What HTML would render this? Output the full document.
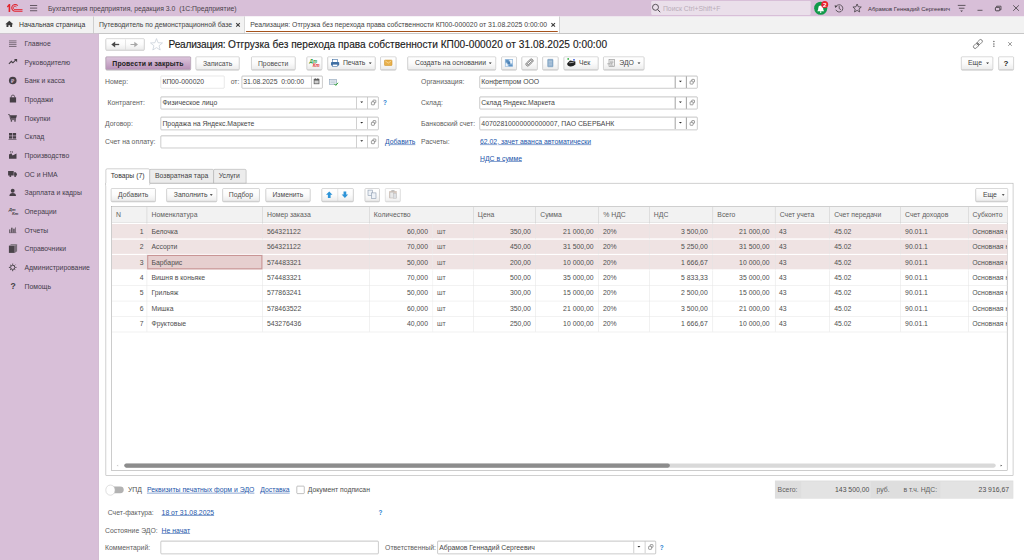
<!DOCTYPE html><html lang="ru"><head><meta charset="utf-8"><title>Реализация</title><style>
html,body{margin:0;padding:0;background:#fff;overflow:hidden;width:1024px;height:560px}
#stage{position:absolute;left:0;top:0;width:1920px;height:1050px;transform:scale(0.533333);transform-origin:0 0;
 font-family:"Liberation Sans",sans-serif;font-size:12.85px;color:#4e4e4e;overflow:hidden;background:#fff}
.a{position:absolute;box-sizing:border-box;white-space:pre}
.t{height:20px;line-height:20px}
.lbl{color:#5e5e5e}
.btn{border:1px solid #b8b8b8;border-radius:2px;background:linear-gradient(#ffffff,#fbfbfb 50%,#ececec);box-shadow:0 1px 1px rgba(0,0,0,.22);text-align:center;line-height:23px;color:#4c4c4c}
.btnp{letter-spacing:0.27px;border:1px solid #8c6c8c;border-radius:2px;background:linear-gradient(#dcc6dc,#c9a9c9 55%,#b892b8);box-shadow:0 1px 1px rgba(0,0,0,.25);text-align:center;line-height:23px;color:#222;font-weight:bold}
.inp{border:1px solid #9e9e9e;box-shadow:inset 0 1px 1px rgba(0,0,0,.07);border-radius:2px;background:#fff;line-height:22px;padding-top:0.5px;padding-left:2.5px;color:#464646}
.inpl{border-color:#d4d4d4;box-shadow:none}
.lnk{color:#2255aa;text-decoration:underline}
.q{color:#2a7fd0;font-weight:bold;font-size:12px}
.side{color:#443c4a}
.th{color:#606060}
</style></head><body><div id="stage">
<div class="a " style="left:0.0px;top:0.0px;width:1920.0px;height:31.0px;background:#d8bfd8"></div>
<div class="a " style="left:0.0px;top:31.0px;width:1920.0px;height:32.0px;background:#f2f2f2;border-bottom:1px solid #9c9c9c"></div>
<div class="a " style="left:0.0px;top:63.0px;width:185.0px;height:987.0px;background:#d8bfd8;border-right:1px solid #c4aac4"></div>
<div class="a t " style="left:90.0px;top:6.0px;color:#4a3f4a">Бухгалтерия предприятия, редакция 3.0  (1С:Предприятие)</div>
<div class="a t " style="left:35.5px;top:36.0px;color:#333">Начальная страница</div>
<div class="a " style="left:174.5px;top:31.0px;width:1.0px;height:31.0px;background:#b0b0b0"></div>
<div class="a t " style="left:185.5px;top:36.0px;color:#444">Путеводитель по демонстрационной базе</div>
<div class="a " style="left:457.5px;top:31.0px;width:1.5px;height:31.0px;background:#b0b0b0"></div>
<div class="a " style="left:459.0px;top:31.0px;width:590.0px;height:31.0px;background:#fff"></div>
<div class="a t " style="left:469.0px;top:36.0px;color:#444">Реализация: Отгрузка без перехода права собственности КП00-000020 от 31.08.2025 0:00:00</div>
<div class="a " style="left:461.0px;top:58.0px;width:585.0px;height:2.0px;background:#a5521c;border-radius:1px"></div>
<div class="a " style="left:1049.0px;top:31.0px;width:1.0px;height:31.0px;background:#b0b0b0"></div>
<div class="a " style="left:1220.5px;top:2.0px;width:299.5px;height:25.5px;background:#eadfea;border-radius:2px"></div>
<div class="a t " style="left:1243.0px;top:6.0px;color:#b9adb9">Поиск Ctrl+Shift+F</div>
<div class="a t " style="left:1627.5px;top:6.0px;font-size:11px;color:#3a3340">Абрамов Геннадий Сергеевич</div>
<div class="a t side" style="left:46.0px;top:71.5px;">Главное</div>
<div class="a t side" style="left:46.0px;top:106.5px;">Руководителю</div>
<div class="a t side" style="left:46.0px;top:141.5px;">Банк и касса</div>
<div class="a t side" style="left:46.0px;top:176.5px;">Продажи</div>
<div class="a t side" style="left:46.0px;top:211.5px;">Покупки</div>
<div class="a t side" style="left:46.0px;top:246.5px;">Склад</div>
<div class="a t side" style="left:46.0px;top:281.5px;">Производство</div>
<div class="a t side" style="left:46.0px;top:316.5px;">ОС и НМА</div>
<div class="a t side" style="left:46.0px;top:351.5px;">Зарплата и кадры</div>
<div class="a t side" style="left:46.0px;top:386.5px;">Операции</div>
<div class="a t side" style="left:46.0px;top:421.5px;">Отчеты</div>
<div class="a t side" style="left:46.0px;top:456.5px;">Справочники</div>
<div class="a t side" style="left:46.0px;top:491.5px;">Администрирование</div>
<div class="a t side" style="left:46.0px;top:526.5px;">Помощь</div>
<div class="a btn" style="left:197.5px;top:71.5px;width:73.0px;height:22.5px;"></div>
<div class="a " style="left:234.5px;top:73.5px;width:1.0px;height:19.5px;background:#d0d0d0"></div>
<div class="a" style="left:316.0px;top:70.0px;height:28px;line-height:28px;font-size:19px;color:#1a1a1a;-webkit-text-stroke:0.25px #1a1a1a"><span style="letter-spacing:-0.4px">Реализация: </span>Отгрузка без перехода права собственности <span style="letter-spacing:0.1px">КП00-000020 от 31.08.2025 0:00:00</span></div>
<div class="a btnp" style="left:197.5px;top:106.0px;width:160.0px;height:24.5px;">Провести и закрыть</div>
<div class="a btn" style="left:367.0px;top:106.0px;width:82.0px;height:24.5px;">Записать</div>
<div class="a btn" style="left:470.5px;top:106.0px;width:83.0px;height:24.5px;">Провести</div>
<div class="a btn" style="left:574.5px;top:106.0px;width:29.5px;height:24.5px;"></div>
<div class="a btn" style="left:613.5px;top:106.0px;width:90.5px;height:24.5px;"></div>
<div class="a t " style="left:643.0px;top:108.0px;color:#444">Печать</div>
<div class="a btn" style="left:713.0px;top:106.0px;width:29.5px;height:24.5px;"></div>
<div class="a btn" style="left:763.5px;top:106.0px;width:166.5px;height:24.5px;"></div>
<div class="a t " style="left:778.0px;top:108.0px;color:#444">Создать на основании</div>
<div class="a btn" style="left:939.5px;top:106.0px;width:29.5px;height:24.5px;"></div>
<div class="a btn" style="left:978.0px;top:106.0px;width:29.5px;height:24.5px;"></div>
<div class="a btn" style="left:1017.0px;top:106.0px;width:30.0px;height:24.5px;"></div>
<div class="a btn" style="left:1056.5px;top:106.0px;width:65.0px;height:24.5px;"></div>
<div class="a t " style="left:1085.5px;top:108.0px;color:#444">Чек</div>
<div class="a btn" style="left:1131.0px;top:106.0px;width:76.5px;height:24.5px;"></div>
<div class="a t " style="left:1161.0px;top:108.0px;color:#444">ЭДО</div>
<div class="a btn" style="left:1801.5px;top:106.0px;width:60.0px;height:24.5px;"></div>
<div class="a t " style="left:1815.0px;top:108.0px;color:#444">Еще</div>
<div class="a btn" style="left:1872.0px;top:106.0px;width:28.5px;height:24.5px;color:#222;font-size:15px"><b>?</b></div>
<div class="a t lbl" style="left:197.0px;top:144.0px;">Номер:</div>
<div class="a inp inpl" style="left:301.0px;top:141.5px;width:120.0px;height:24.5px;">КП00-000020</div>
<div class="a t lbl" style="left:432.5px;top:144.0px;">от:</div>
<div class="a inp" style="left:452.5px;top:141.5px;width:152.0px;height:24.5px;">31.08.2025  0:00:00</div>
<div class="a " style="left:583.5px;top:142.5px;width:1.0px;height:22.5px;background:#a8a8a8"></div>
<div class="a t lbl" style="left:201.5px;top:183.0px;">Контрагент:</div>
<div class="a inp" style="left:301.0px;top:180.5px;width:409.0px;height:24.5px;">Физическое лицо</div>
<div class="a " style="left:667.5px;top:181.5px;width:1.0px;height:22.5px;background:#a8a8a8"></div>
<div class="a " style="left:688.5px;top:181.5px;width:1.0px;height:22.5px;background:#a8a8a8"></div>
<div class="a t q" style="left:718.0px;top:182.5px;">?</div>
<div class="a t lbl" style="left:197.0px;top:223.0px;">Договор:</div>
<div class="a inp" style="left:301.0px;top:219.0px;width:409.0px;height:24.5px;">Продажа на Яндекс.Маркете</div>
<div class="a " style="left:667.5px;top:220.0px;width:1.0px;height:22.0px;background:#a8a8a8"></div>
<div class="a " style="left:688.5px;top:220.0px;width:1.0px;height:22.0px;background:#a8a8a8"></div>
<div class="a t lbl" style="left:197.0px;top:256.0px;">Счет на оплату:</div>
<div class="a inp" style="left:301.0px;top:253.5px;width:409.0px;height:24.5px;"></div>
<div class="a " style="left:667.5px;top:254.0px;width:1.0px;height:23.0px;background:#a8a8a8"></div>
<div class="a " style="left:688.5px;top:254.0px;width:1.0px;height:23.0px;background:#a8a8a8"></div>
<div class="a t lnk" style="left:722.0px;top:256.0px;">Добавить</div>
<div class="a t lbl" style="left:789.5px;top:144.0px;">Организация:</div>
<div class="a inp" style="left:899.0px;top:141.5px;width:409.0px;height:24.5px;">Конфетпром ООО</div>
<div class="a " style="left:1265.0px;top:142.5px;width:1.5px;height:22.5px;background:#a8a8a8"></div>
<div class="a " style="left:1286.0px;top:142.5px;width:1.5px;height:22.5px;background:#a8a8a8"></div>
<div class="a t lbl" style="left:789.5px;top:183.0px;">Склад:</div>
<div class="a inp" style="left:899.0px;top:180.5px;width:409.0px;height:24.5px;">Склад Яндекс.Маркета</div>
<div class="a " style="left:1265.0px;top:181.5px;width:1.5px;height:22.5px;background:#a8a8a8"></div>
<div class="a " style="left:1286.0px;top:181.5px;width:1.5px;height:22.5px;background:#a8a8a8"></div>
<div class="a t lbl" style="left:789.5px;top:222.5px;">Банковский счет:</div>
<div class="a inp" style="left:899.0px;top:219.0px;width:409.0px;height:24.5px;">40702810000000000007, ПАО СБЕРБАНК</div>
<div class="a " style="left:1265.0px;top:220.0px;width:1.5px;height:22.0px;background:#a8a8a8"></div>
<div class="a " style="left:1286.0px;top:220.0px;width:1.5px;height:22.0px;background:#a8a8a8"></div>
<div class="a t lbl" style="left:789.5px;top:256.0px;">Расчеты:</div>
<div class="a t lnk" style="left:900.0px;top:255.5px;">62.02, зачет аванса автоматически</div>
<div class="a t lnk" style="left:900.0px;top:287.0px;">НДС в сумме</div>
<div class="a " style="left:197.5px;top:343.0px;width:1702.5px;height:549.0px;border:1px solid #a8a8a8;background:#fff"></div>
<div class="a " style="left:280.0px;top:316.5px;width:120.5px;height:27.5px;background:#ececec;border:1px solid #a8a8a8;border-radius:3px 3px 0 0"></div>
<div class="a " style="left:399.5px;top:316.5px;width:62.5px;height:27.5px;background:#ececec;border:1px solid #a8a8a8;border-radius:3px 3px 0 0"></div>
<div class="a " style="left:197.5px;top:316.0px;width:83.0px;height:31.0px;background:#fff;border:1px solid #a8a8a8;border-radius:3px 3px 0 0"></div>
<div class="a " style="left:198.5px;top:342.5px;width:81.0px;height:6.5px;background:#fff"></div>
<div class="a t " style="left:207.5px;top:320.0px;color:#333">Товары (7)</div>
<div class="a t " style="left:290.5px;top:320.0px;color:#444">Возвратная тара</div>
<div class="a t " style="left:410.0px;top:320.0px;color:#444">Услуги</div>
<div class="a btn" style="left:208.0px;top:352.5px;width:83.5px;height:25.0px;">Добавить</div>
<div class="a btn" style="left:312.0px;top:352.5px;width:94.5px;height:25.0px;"></div>
<div class="a t " style="left:326.0px;top:355.0px;color:#444">Заполнить</div>
<div class="a btn" style="left:416.5px;top:352.5px;width:70.5px;height:25.0px;">Подбор</div>
<div class="a btn" style="left:497.5px;top:352.5px;width:84.5px;height:25.0px;">Изменить</div>
<div class="a btn" style="left:603.0px;top:352.5px;width:60.0px;height:25.0px;"></div>
<div class="a " style="left:632.5px;top:353.5px;width:1.0px;height:23.0px;background:#d0d0d0"></div>
<div class="a btn" style="left:683.5px;top:352.5px;width:28.5px;height:25.0px;"></div>
<div class="a btn" style="left:722.0px;top:352.5px;width:29.0px;height:25.0px;opacity:.7"></div>
<div class="a btn" style="left:1829.0px;top:352.5px;width:60.5px;height:25.0px;"></div>
<div class="a t " style="left:1843.0px;top:355.0px;color:#444">Еще</div>
<div class="a " style="left:209.0px;top:386.5px;width:1680.0px;height:496.5px;border:1px solid #a0a0a0;background:#fff"></div>
<div class="a " style="left:210.0px;top:388.0px;width:1678.5px;height:30.0px;background:#f2f2f2;border-bottom:1px solid #dcdcdc"></div>
<div class="a " style="left:210.0px;top:420.0px;width:1678.5px;height:26.5px;background:#efe3e3"></div>
<div class="a " style="left:210.0px;top:449.0px;width:1678.5px;height:26.5px;background:#efe3e3"></div>
<div class="a " style="left:210.0px;top:478.0px;width:1678.5px;height:26.5px;background:#efe3e3"></div>
<div class="a t th" style="left:217.5px;top:393.0px;">N</div>
<div class="a t th" style="left:284.0px;top:393.0px;">Номенклатура</div>
<div class="a " style="left:275.0px;top:388.0px;width:1.0px;height:31.0px;background:#cdcdcd"></div>
<div class="a " style="left:275.0px;top:419.0px;width:1.0px;height:203.0px;background:#e4e4e4"></div>
<div class="a t th" style="left:500.5px;top:393.0px;">Номер заказа</div>
<div class="a " style="left:491.5px;top:388.0px;width:1.0px;height:31.0px;background:#cdcdcd"></div>
<div class="a " style="left:491.5px;top:419.0px;width:1.0px;height:203.0px;background:#e4e4e4"></div>
<div class="a t th" style="left:701.0px;top:393.0px;">Количество</div>
<div class="a " style="left:692.0px;top:388.0px;width:1.0px;height:31.0px;background:#cdcdcd"></div>
<div class="a " style="left:692.0px;top:419.0px;width:1.0px;height:203.0px;background:#e4e4e4"></div>
<div class="a t th" style="left:896.0px;top:393.0px;">Цена</div>
<div class="a " style="left:887.0px;top:388.0px;width:1.0px;height:31.0px;background:#cdcdcd"></div>
<div class="a " style="left:887.0px;top:419.0px;width:1.0px;height:203.0px;background:#e4e4e4"></div>
<div class="a t th" style="left:1013.0px;top:393.0px;">Сумма</div>
<div class="a " style="left:1004.0px;top:388.0px;width:1.0px;height:31.0px;background:#cdcdcd"></div>
<div class="a " style="left:1004.0px;top:419.0px;width:1.0px;height:203.0px;background:#e4e4e4"></div>
<div class="a t th" style="left:1131.0px;top:393.0px;">% НДС</div>
<div class="a " style="left:1122.0px;top:388.0px;width:1.0px;height:31.0px;background:#cdcdcd"></div>
<div class="a " style="left:1122.0px;top:419.0px;width:1.0px;height:203.0px;background:#e4e4e4"></div>
<div class="a t th" style="left:1226.0px;top:393.0px;">НДС</div>
<div class="a " style="left:1217.0px;top:388.0px;width:1.0px;height:31.0px;background:#cdcdcd"></div>
<div class="a " style="left:1217.0px;top:419.0px;width:1.0px;height:203.0px;background:#e4e4e4"></div>
<div class="a t th" style="left:1345.0px;top:393.0px;">Всего</div>
<div class="a " style="left:1335.5px;top:388.0px;width:1.0px;height:31.0px;background:#cdcdcd"></div>
<div class="a " style="left:1335.5px;top:419.0px;width:1.0px;height:203.0px;background:#e4e4e4"></div>
<div class="a t th" style="left:1462.0px;top:393.0px;">Счет учета</div>
<div class="a " style="left:1452.5px;top:388.0px;width:1.0px;height:31.0px;background:#cdcdcd"></div>
<div class="a " style="left:1452.5px;top:419.0px;width:1.0px;height:203.0px;background:#e4e4e4"></div>
<div class="a t th" style="left:1564.0px;top:393.0px;">Счет передачи</div>
<div class="a " style="left:1555.0px;top:388.0px;width:1.0px;height:31.0px;background:#cdcdcd"></div>
<div class="a " style="left:1555.0px;top:419.0px;width:1.0px;height:203.0px;background:#e4e4e4"></div>
<div class="a t th" style="left:1697.0px;top:393.0px;">Счет доходов</div>
<div class="a " style="left:1688.0px;top:388.0px;width:1.0px;height:31.0px;background:#cdcdcd"></div>
<div class="a " style="left:1688.0px;top:419.0px;width:1.0px;height:203.0px;background:#e4e4e4"></div>
<div class="a t th" style="left:1823.5px;top:393.0px;">Субконто</div>
<div class="a " style="left:1814.5px;top:388.0px;width:1.0px;height:31.0px;background:#cdcdcd"></div>
<div class="a " style="left:1814.5px;top:419.0px;width:1.0px;height:203.0px;background:#e4e4e4"></div>
<div class="a " style="left:811.0px;top:419.0px;width:0.5px;height:203.0px;background:#ececec"></div>
<div class="a " style="left:210.0px;top:447.5px;width:1678.5px;height:1.0px;background:#fff"></div>
<div class="a t " style="right:1651.0px;top:423.5px;">1</div>
<div class="a t " style="left:284.0px;top:423.5px;">Белочка</div>
<div class="a t " style="left:500.5px;top:423.5px;">564321122</div>
<div class="a t " style="right:1117.5px;top:423.5px;">60,000</div>
<div class="a t lbl" style="left:819.5px;top:423.5px;">шт</div>
<div class="a t " style="right:924.5px;top:423.5px;">350,00</div>
<div class="a t " style="right:807.0px;top:423.5px;">21 000,00</div>
<div class="a t " style="left:1130.5px;top:423.5px;">20%</div>
<div class="a t " style="right:593.0px;top:423.5px;">3 500,00</div>
<div class="a t " style="right:477.0px;top:423.5px;">21 000,00</div>
<div class="a t " style="left:1460.5px;top:423.5px;">43</div>
<div class="a t " style="left:1564.0px;top:423.5px;">45.02</div>
<div class="a t " style="left:1697.0px;top:423.5px;">90.01.1</div>
<div class="a t" style="left:1823.0px;top:423.5px;width:64.5px;overflow:hidden">Основная номенклатурная группа</div>
<div class="a " style="left:210.0px;top:476.5px;width:1678.5px;height:1.0px;background:#fff"></div>
<div class="a t " style="right:1651.0px;top:452.5px;">2</div>
<div class="a t " style="left:284.0px;top:452.5px;">Ассорти</div>
<div class="a t " style="left:500.5px;top:452.5px;">564321122</div>
<div class="a t " style="right:1117.5px;top:452.5px;">70,000</div>
<div class="a t lbl" style="left:819.5px;top:452.5px;">шт</div>
<div class="a t " style="right:924.5px;top:452.5px;">450,00</div>
<div class="a t " style="right:807.0px;top:452.5px;">31 500,00</div>
<div class="a t " style="left:1130.5px;top:452.5px;">20%</div>
<div class="a t " style="right:593.0px;top:452.5px;">5 250,00</div>
<div class="a t " style="right:477.0px;top:452.5px;">31 500,00</div>
<div class="a t " style="left:1460.5px;top:452.5px;">43</div>
<div class="a t " style="left:1564.0px;top:452.5px;">45.02</div>
<div class="a t " style="left:1697.0px;top:452.5px;">90.01.1</div>
<div class="a t" style="left:1823.0px;top:452.5px;width:64.5px;overflow:hidden">Основная номенклатурная группа</div>
<div class="a " style="left:210.0px;top:505.5px;width:1678.5px;height:1.0px;background:#fff"></div>
<div class="a t " style="right:1651.0px;top:481.5px;">3</div>
<div class="a " style="left:276.0px;top:477.5px;width:215.5px;height:27.5px;background:#e6cfcf;border:2px solid #c99595"></div>
<div class="a t " style="left:284.0px;top:481.5px;">Барбарис</div>
<div class="a t " style="left:500.5px;top:481.5px;">574483321</div>
<div class="a t " style="right:1117.5px;top:481.5px;">50,000</div>
<div class="a t lbl" style="left:819.5px;top:481.5px;">шт</div>
<div class="a t " style="right:924.5px;top:481.5px;">200,00</div>
<div class="a t " style="right:807.0px;top:481.5px;">10 000,00</div>
<div class="a t " style="left:1130.5px;top:481.5px;">20%</div>
<div class="a t " style="right:593.0px;top:481.5px;">1 666,67</div>
<div class="a t " style="right:477.0px;top:481.5px;">10 000,00</div>
<div class="a t " style="left:1460.5px;top:481.5px;">43</div>
<div class="a t " style="left:1564.0px;top:481.5px;">45.02</div>
<div class="a t " style="left:1697.0px;top:481.5px;">90.01.1</div>
<div class="a t" style="left:1823.0px;top:481.5px;width:64.5px;overflow:hidden">Основная номенклатурная группа</div>
<div class="a " style="left:210.0px;top:534.5px;width:1678.5px;height:1.0px;background:#e6e6e6"></div>
<div class="a t " style="right:1651.0px;top:510.5px;">4</div>
<div class="a t " style="left:284.0px;top:510.5px;">Вишня в коньяке</div>
<div class="a t " style="left:500.5px;top:510.5px;">574483321</div>
<div class="a t " style="right:1117.5px;top:510.5px;">70,000</div>
<div class="a t lbl" style="left:819.5px;top:510.5px;">шт</div>
<div class="a t " style="right:924.5px;top:510.5px;">500,00</div>
<div class="a t " style="right:807.0px;top:510.5px;">35 000,00</div>
<div class="a t " style="left:1130.5px;top:510.5px;">20%</div>
<div class="a t " style="right:593.0px;top:510.5px;">5 833,33</div>
<div class="a t " style="right:477.0px;top:510.5px;">35 000,00</div>
<div class="a t " style="left:1460.5px;top:510.5px;">43</div>
<div class="a t " style="left:1564.0px;top:510.5px;">45.02</div>
<div class="a t " style="left:1697.0px;top:510.5px;">90.01.1</div>
<div class="a t" style="left:1823.0px;top:510.5px;width:64.5px;overflow:hidden">Основная номенклатурная группа</div>
<div class="a " style="left:210.0px;top:563.5px;width:1678.5px;height:1.0px;background:#e6e6e6"></div>
<div class="a t " style="right:1651.0px;top:539.5px;">5</div>
<div class="a t " style="left:284.0px;top:539.5px;">Грильяж</div>
<div class="a t " style="left:500.5px;top:539.5px;">577863241</div>
<div class="a t " style="right:1117.5px;top:539.5px;">50,000</div>
<div class="a t lbl" style="left:819.5px;top:539.5px;">шт</div>
<div class="a t " style="right:924.5px;top:539.5px;">300,00</div>
<div class="a t " style="right:807.0px;top:539.5px;">15 000,00</div>
<div class="a t " style="left:1130.5px;top:539.5px;">20%</div>
<div class="a t " style="right:593.0px;top:539.5px;">2 500,00</div>
<div class="a t " style="right:477.0px;top:539.5px;">15 000,00</div>
<div class="a t " style="left:1460.5px;top:539.5px;">43</div>
<div class="a t " style="left:1564.0px;top:539.5px;">45.02</div>
<div class="a t " style="left:1697.0px;top:539.5px;">90.01.1</div>
<div class="a t" style="left:1823.0px;top:539.5px;width:64.5px;overflow:hidden">Основная номенклатурная группа</div>
<div class="a " style="left:210.0px;top:592.5px;width:1678.5px;height:1.0px;background:#e6e6e6"></div>
<div class="a t " style="right:1651.0px;top:568.5px;">6</div>
<div class="a t " style="left:284.0px;top:568.5px;">Мишка</div>
<div class="a t " style="left:500.5px;top:568.5px;">578463522</div>
<div class="a t " style="right:1117.5px;top:568.5px;">60,000</div>
<div class="a t lbl" style="left:819.5px;top:568.5px;">шт</div>
<div class="a t " style="right:924.5px;top:568.5px;">350,00</div>
<div class="a t " style="right:807.0px;top:568.5px;">21 000,00</div>
<div class="a t " style="left:1130.5px;top:568.5px;">20%</div>
<div class="a t " style="right:593.0px;top:568.5px;">3 500,00</div>
<div class="a t " style="right:477.0px;top:568.5px;">21 000,00</div>
<div class="a t " style="left:1460.5px;top:568.5px;">43</div>
<div class="a t " style="left:1564.0px;top:568.5px;">45.02</div>
<div class="a t " style="left:1697.0px;top:568.5px;">90.01.1</div>
<div class="a t" style="left:1823.0px;top:568.5px;width:64.5px;overflow:hidden">Основная номенклатурная группа</div>
<div class="a " style="left:210.0px;top:621.5px;width:1678.5px;height:1.0px;background:#e6e6e6"></div>
<div class="a t " style="right:1651.0px;top:597.5px;">7</div>
<div class="a t " style="left:284.0px;top:597.5px;">Фруктовые</div>
<div class="a t " style="left:500.5px;top:597.5px;">543276436</div>
<div class="a t " style="right:1117.5px;top:597.5px;">40,000</div>
<div class="a t lbl" style="left:819.5px;top:597.5px;">шт</div>
<div class="a t " style="right:924.5px;top:597.5px;">250,00</div>
<div class="a t " style="right:807.0px;top:597.5px;">10 000,00</div>
<div class="a t " style="left:1130.5px;top:597.5px;">20%</div>
<div class="a t " style="right:593.0px;top:597.5px;">1 666,67</div>
<div class="a t " style="right:477.0px;top:597.5px;">10 000,00</div>
<div class="a t " style="left:1460.5px;top:597.5px;">43</div>
<div class="a t " style="left:1564.0px;top:597.5px;">45.02</div>
<div class="a t " style="left:1697.0px;top:597.5px;">90.01.1</div>
<div class="a t" style="left:1823.0px;top:597.5px;width:64.5px;overflow:hidden">Основная номенклатурная группа</div>
<div class="a " style="left:232.5px;top:869.0px;width:1634.0px;height:8.0px;background:#d9d9d9;border-radius:4px"></div>
<div class="a " style="left:232.5px;top:869.0px;width:1023.5px;height:8.0px;background:#8c8c8c;border-radius:4px"></div>
<div class="a " style="left:202.5px;top:912.0px;width:29.5px;height:12.5px;background:#b2b2b2;border-radius:7px"></div>
<div class="a " style="left:197.5px;top:909.0px;width:18.5px;height:19.5px;background:#fff;border:1.5px solid #c2c2c2;border-radius:10px"></div>
<div class="a t " style="left:240.0px;top:909.0px;">УПД</div>
<div class="a t lnk" style="left:275.5px;top:909.0px;">Реквизиты печатных форм и ЭДО</div>
<div class="a t lnk" style="left:488.0px;top:909.0px;">Доставка</div>
<div class="a " style="left:555.5px;top:911.0px;width:15.5px;height:15.0px;border:1px solid #8a8a8a;border-radius:2px;background:#fff"></div>
<div class="a t " style="left:577.0px;top:909.0px;">Документ подписан</div>
<div class="a " style="left:1452.5px;top:901.0px;width:447.5px;height:34.0px;background:#dedede"></div>
<div class="a " style="left:1502.0px;top:902.5px;width:131.0px;height:31.0px;background:#e3e3e3"></div>
<div class="a " style="left:1762.5px;top:902.5px;width:136.0px;height:31.0px;background:#e3e3e3"></div>
<div class="a t lbl" style="left:1458.0px;top:908.5px;">Всего:</div>
<div class="a t " style="right:290.0px;top:908.5px;">143 500,00</div>
<div class="a t lbl" style="left:1643.5px;top:908.5px;">руб.</div>
<div class="a t lbl" style="left:1694.0px;top:908.5px;">в т.ч. НДС:</div>
<div class="a t " style="right:28.0px;top:908.5px;">23 916,67</div>
<div class="a t lbl" style="left:202.0px;top:951.0px;">Счет-фактура:</div>
<div class="a t lnk" style="left:303.0px;top:951.0px;">18 от 31.08.2025</div>
<div class="a t q" style="left:709.5px;top:951.0px;">?</div>
<div class="a t lbl" style="left:197.0px;top:985.0px;">Состояние ЭДО:</div>
<div class="a t lnk" style="left:303.0px;top:985.0px;">Не начат</div>
<div class="a t lbl" style="left:197.0px;top:1016.5px;">Комментарий:</div>
<div class="a inp" style="left:301.0px;top:1014.0px;width:409.0px;height:24.5px;"></div>
<div class="a t lbl" style="left:722.0px;top:1016.5px;">Ответственный:</div>
<div class="a inp" style="left:820.0px;top:1014.0px;width:410.0px;height:24.5px;">Абрамов Геннадий Сергеевич</div>
<div class="a " style="left:1187.5px;top:1015.0px;width:1.0px;height:22.0px;background:#a8a8a8"></div>
<div class="a " style="left:1208.5px;top:1015.0px;width:1.0px;height:22.0px;background:#a8a8a8"></div>
<div class="a t q" style="left:1237.0px;top:1016.5px;">?</div>
<svg class="a" style="left:0;top:0;width:1920px;height:1050px" viewBox="0 0 1024 560">
<!-- 1C logo -->
<path d="M6.9 6.5 L8.9 4.1 H10.2 V11.9 H8.6 V6.5 L7.5 7.6 Z" fill="#e2232c"/>
<g fill="none" stroke="#e2232c">
<path d="M17.7 5.7 A3.4 3.4 0 1 0 14.9 11.3 H22.5" stroke-width="1.05"/>
<path d="M16.4 6.9 A1.75 1.75 0 1 0 14.9 9.65 H22.5" stroke-width="0.95"/>
</g>
<!-- hamburger -->
<g stroke="#5e525e" stroke-width="0.95"><path d="M30 5.5H37.2M30 8.1H37.2M30 10.75H37.2"/></g>
<!-- home -->
<path d="M5.3 24.3 L9.3 20.7 L13.3 24.3 L12.1 24.3 L12.1 27.1 L10.2 27.1 L10.2 25.2 L8.4 25.2 L8.4 27.1 L6.5 27.1 L6.5 24.3 Z" fill="#3a3a3a"/>
<!-- magnifier -->
<circle cx="655.5" cy="7.3" r="3.0" fill="none" stroke="#4a444a" stroke-width="0.9"/>
<path d="M657.7 9.6 L660.2 12.2" stroke="#4a444a" stroke-width="1.0"/>
<!-- bell -->
<circle cx="820.7" cy="8.25" r="6.55" fill="#12994a"/>
<path d="M817.2 11.2 Q818.3 10.2 818.3 7.9 A2.4 2.4 0 0 1 823.1 7.9 Q823.1 10.2 824.2 11.2 Z" fill="#fff"/>
<circle cx="820.7" cy="12.1" r="0.8" fill="#fff"/>
<circle cx="824.7" cy="4.5" r="3.5" fill="#e9222e"/>
<text x="824.7" y="6.7" font-size="6.2" font-weight="bold" fill="#fff" text-anchor="middle" font-family="Liberation Sans, sans-serif">2</text>
<!-- history -->
<g fill="none" stroke="#4a444a" stroke-width="0.85">
<path d="M836.2 6.4 A3.6 3.6 0 1 1 835.9 9.8"/>
<path d="M839.2 6.1 V8.6 L841 9.7"/>
</g>
<polygon points="834.6,5.2 837.5,6.0 835.2,7.9" fill="#4a444a"/>
<!-- star -->
<polygon points="857.10,4.00 858.28,6.78 861.28,7.04 859.00,9.02 859.69,11.96 857.10,10.40 854.51,11.96 855.20,9.02 852.92,7.04 855.92,6.78" fill="none" stroke="#4a444a" stroke-width="0.85" stroke-linejoin="round"/>
<!-- settings -->
<g stroke="#4a444a" stroke-width="0.85"><path d="M957.8 5.4H965.5M958.9 8.25H964.5"/></g>
<polygon points="960.2,10.6 963,10.6 961.6,12.1" fill="#4a444a"/>
<!-- window buttons -->
<g stroke="#4a444a" stroke-width="0.85" fill="none">
<path d="M977.5 10.3H982.5"/>
<path d="M996.6 7.3 V6.2 H1001 V9.8 H999.9"/>
<rect x="995.4" y="7.3" width="4.4" height="3.5" rx="0.8" stroke-width="1.0"/>
<path d="M1013.2 5.3 L1018.9 10.8 M1018.9 5.3 L1013.2 10.8"/>
</g>
<!-- tab close x -->
<g stroke="#3a3a3a" stroke-width="1.05"><path d="M236.2 23.1 L239.8 26.7 M239.8 23.1 L236.2 26.7"/><path d="M551.4 23.1 L555 26.7 M555 23.1 L551.4 26.7"/></g>

<!-- sidebar icons -->
<g stroke="#5c525c" stroke-width="0.75"><path d="M9 40.9H16.5M9 42.75H16.5M9 44.6H16.5M9 46.5H16.5"/></g>
<path d="M8.9 63.8 L11.4 61.3 L12.9 62.8 L15.8 59.9" fill="none" stroke="#463f46" stroke-width="1.1"/>
<polygon points="14,59.1 17.1,59.1 17.1,62.2" fill="#463f46"/>
<circle cx="12.75" cy="80.5" r="3.8" fill="#463f46"/>
<text x="12.8" y="82.6" font-size="5.6" font-weight="bold" fill="#c8b0c8" text-anchor="middle" font-family="Liberation Sans, sans-serif">₽</text>
<rect x="9.8" y="97.3" width="6.3" height="5.2" fill="#463f46"/>
<path d="M11.3 97.6 V96.7 A1.65 1.65 0 0 1 14.6 96.7 V97.6" fill="none" stroke="#463f46" stroke-width="0.8"/>
<path d="M8.1 114.6 H9.5 L10.7 119.6 H16" fill="none" stroke="#463f46" stroke-width="0.8"/>
<polygon points="9.9,115.2 17,115.2 15.9,118.7 10.7,118.7" fill="#463f46"/>
<circle cx="11.4" cy="120.9" r="0.8" fill="#463f46"/><circle cx="15" cy="120.9" r="0.8" fill="#463f46"/>
<g fill="#463f46"><rect x="9" y="133" width="3.3" height="2.6"/><rect x="12.9" y="133" width="3.2" height="2.6"/><rect x="9" y="136.2" width="3.3" height="2.4"/><rect x="12.9" y="136.2" width="3.2" height="2.4"/><rect x="8.5" y="139.3" width="8" height="0.6"/></g>
<path d="M9 158.7 V154.6 L11.3 153.3 L12.6 155.6 L16.5 153.4 V158.7 Z" fill="#463f46"/>
<rect x="10.2" y="151.3" width="1.1" height="1.1" fill="#463f46"/><rect x="12" y="151.5" width="1.0" height="1.0" fill="#463f46"/>
<rect x="8.1" y="171" width="5.6" height="4.5" fill="#463f46"/>
<polygon points="14.1,172.3 15.8,172.3 16.9,173.8 16.9,175.5 14.1,175.5" fill="#463f46"/>
<circle cx="10.3" cy="176" r="1.0" fill="#463f46"/><circle cx="15.1" cy="176" r="1.0" fill="#463f46"/>
<circle cx="12.7" cy="190.7" r="1.95" fill="#463f46"/>
<path d="M9.4 196 Q9.4 193.1 12.7 193.1 Q16 193.1 16 196 Z" fill="#463f46"/>
<text x="8.7" y="211" font-size="4.3" font-weight="bold" font-style="italic" fill="#463f46" font-family="Liberation Sans, sans-serif">Дт</text>
<text x="11.9" y="214.8" font-size="4.3" font-weight="bold" font-style="italic" fill="#463f46" font-family="Liberation Sans, sans-serif">Кт</text>
<g fill="#463f46"><rect x="9.3" y="229.4" width="1.0" height="3.3"/><rect x="11.2" y="227.7" width="1.3" height="5"/><rect x="13.3" y="228.7" width="1.3" height="4"/><rect x="15.3" y="227.4" width="0.6" height="5.3"/><rect x="9" y="232.6" width="7.4" height="0.5"/></g>
<rect x="8.9" y="245.7" width="5.8" height="7.2" fill="#4a444a"/>
<polygon points="8.9,245.7 11.2,244 17.1,244 14.7,245.7" fill="#8a808a"/>
<polygon points="14.7,245.7 17.1,244 17.1,251.2 14.7,252.9" fill="#7a707a"/>
<circle cx="12.7" cy="267.4" r="2.1" fill="none" stroke="#4a444a" stroke-width="1.0"/><line x1="15.30" y1="267.40" x2="16.50" y2="267.40" stroke="#4a444a" stroke-width="1.0"/><line x1="14.54" y1="269.24" x2="15.39" y2="270.09" stroke="#4a444a" stroke-width="1.0"/><line x1="12.70" y1="270.00" x2="12.70" y2="271.20" stroke="#4a444a" stroke-width="1.0"/><line x1="10.86" y1="269.24" x2="10.01" y2="270.09" stroke="#4a444a" stroke-width="1.0"/><line x1="10.10" y1="267.40" x2="8.90" y2="267.40" stroke="#4a444a" stroke-width="1.0"/><line x1="10.86" y1="265.56" x2="10.01" y2="264.71" stroke="#4a444a" stroke-width="1.0"/><line x1="12.70" y1="264.80" x2="12.70" y2="263.60" stroke="#4a444a" stroke-width="1.0"/><line x1="14.54" y1="265.56" x2="15.39" y2="264.71" stroke="#4a444a" stroke-width="1.0"/>
<text x="13.05" y="289.3" font-size="8.6" font-weight="bold" fill="#463f46" text-anchor="middle" font-family="Liberation Sans, sans-serif">?</text>

<!-- nav arrows -->
<path d="M113 44.5 H119.2" stroke="#4a4a4a" stroke-width="1.3"/><polygon points="111.3,44.5 115.2,41.6 115.2,47.4" fill="#4a4a4a"/>
<path d="M130.5 44.5 H136.5" stroke="#a8a8a8" stroke-width="1.0"/><polygon points="138,44.5 134.3,41.7 134.3,47.3" fill="#a8a8a8"/>
<polygon points="156.50,38.60 158.09,42.72 162.49,42.95 159.07,45.73 160.20,50.00 156.50,47.60 152.80,50.00 153.93,45.73 150.51,42.95 154.91,42.72" fill="none" stroke="#c6cfd8" stroke-width="0.75" stroke-linejoin="round"/>

<!-- DtKt button -->
<text x="309.6" y="62.7" font-size="4.6" font-weight="bold" font-style="italic" fill="#2a9a3a" font-family="Liberation Sans, sans-serif">Дт</text>
<text x="312.8" y="66.8" font-size="4.6" font-weight="bold" font-style="italic" fill="#e03535" font-family="Liberation Sans, sans-serif">Кт</text>
<!-- printer -->
<rect x="332.7" y="59.6" width="4.8" height="3" fill="#fff" stroke="#3f6fa3" stroke-width="0.6"/>
<rect x="331" y="61.9" width="8.2" height="3.7" rx="0.9" fill="#3f6fa3"/>
<rect x="332.7" y="64.2" width="4.8" height="2.5" fill="#fff" stroke="#3f6fa3" stroke-width="0.6"/>
<!-- mail -->
<rect x="384.5" y="60.1" width="7.5" height="5.4" rx="0.6" fill="#e9b14c" stroke="#cf962f" stroke-width="0.6"/>
<path d="M385.2 60.8 L388.25 63.1 L391.3 60.8" fill="none" stroke="#fbe6b8" stroke-width="0.6"/>
<!-- structure icon -->
<rect x="504.9" y="59" width="8.1" height="7.8" fill="#9dbfdf"/>
<rect x="505.7" y="59.8" width="3" height="2.6" fill="#5f93c4"/><rect x="509.5" y="59.9" width="2.7" height="3.4" fill="#eef4fa"/>
<rect x="505.7" y="63.3" width="2" height="2.8" fill="#eef4fa"/><rect x="508.6" y="64.4" width="3.8" height="1.8" rx="0.6" fill="#5f93c4"/>
<rect x="507.4" y="61.4" width="2.8" height="2.8" fill="#4d82b5"/>
<!-- clip -->
<g transform="rotate(-43 529.5 62.5)" fill="none" stroke="#6a6a6a" stroke-width="0.75">
<rect x="525.2" y="60.7" width="8.6" height="3.6" rx="1.8"/><rect x="526.4" y="61.7" width="6.4" height="1.6" rx="0.8"/></g>
<!-- list icon -->
<rect x="547.7" y="59.3" width="5.3" height="7.5" rx="0.5" fill="#86a8c8" stroke="#6f95ba" stroke-width="0.5"/>
<g stroke="#dbe7f1" stroke-width="0.65"><path d="M548.5 61.2H552.2M548.5 63H552.2M548.5 64.9H552.2"/></g>
<!-- check printer icon -->
<path d="M567.3 63.2 L570 60.6 L575.4 61.6 L575.4 64.6 Q573 66.8 570 66.4 Q567.6 66 567.3 64.8 Z" fill="#222"/>
<path d="M569.3 62.8 L573.8 62.2" stroke="#fff" stroke-width="0.6"/>
<circle cx="568.2" cy="58.9" r="0.9" fill="#2fae3f"/><circle cx="574" cy="59.8" r="0.9" fill="#2b4fd6"/>
<!-- EDO icon -->
<rect x="609" y="59.6" width="5.4" height="7" fill="#f3f3f3" stroke="#8e8e8e" stroke-width="0.6"/>
<g stroke="#8a8a8a" stroke-width="0.55"><path d="M610 61.2H613.4M610 62.6H613.4M607.2 63.8H611.6M610 65.2H613.4"/></g>
<polygon points="611.4,62.9 612.8,63.8 611.4,64.7" fill="#9a9a9a"/>

<!-- calendar -->
<rect x="314.1" y="79.2" width="4.9" height="4.6" fill="#cfcfcf" stroke="#555" stroke-width="0.7"/>
<rect x="314.1" y="79.2" width="4.9" height="1.3" fill="#555"/>
<path d="M315.3 78.2 V79.4 M317.8 78.2 V79.4" stroke="#444" stroke-width="0.7"/>
<!-- list-check -->
<rect x="329.4" y="79.5" width="7.2" height="4.8" fill="#e3e9f0" stroke="#8ea2b8" stroke-width="0.6"/>
<path d="M330.6 81H335.4M330.6 82.6H335.4" stroke="#aebccb" stroke-width="0.5"/>
<path d="M334.4 83.9 L335.8 85.4 L338 82.8" fill="none" stroke="#2aa52f" stroke-width="1.0"/>

<!-- arrows up/down -->
<polygon points="329.25,191.4 332.5,194.8 330.6,194.8 330.6,197.9 327.9,197.9 327.9,194.8 326,194.8" fill="#2e94d8"/>
<polygon points="344.9,197.9 348.15,194.5 346.25,194.5 346.25,191.4 343.55,191.4 343.55,194.5 341.65,194.5" fill="#2e94d8"/>
<!-- copy -->
<rect x="368" y="190.1" width="4.6" height="5.6" fill="#eef2f7" stroke="#8393a8" stroke-width="0.55"/>
<rect x="371.4" y="192.9" width="4.6" height="5.6" fill="#eef2f7" stroke="#8393a8" stroke-width="0.55"/>
<!-- paste -->
<g opacity="0.75"><rect x="389" y="190.9" width="7.8" height="7.4" rx="0.5" fill="#c9b7aa"/><rect x="391.3" y="190.2" width="3.2" height="1.3" fill="#9a9a9a"/>
<rect x="390" y="192.3" width="3.4" height="5.6" fill="#e4e4e4" stroke="#aaa" stroke-width="0.4"/><rect x="393.2" y="193.4" width="3.4" height="4.9" fill="#d4d8dd" stroke="#aaa" stroke-width="0.4"/></g>

<!-- link / kebab / close -->
<g transform="translate(977.9 44) rotate(-45)" stroke="#707070" fill="none" stroke-width="0.85"><path d="M-3.9 -1.7 H-1.2 A1.7 1.7 0 0 1 -1.2 1.7 H-3.9 A1.7 1.7 0 0 1 -3.9 -1.7 Z"/><path d="M1.2 -1.7 H3.9 A1.7 1.7 0 0 1 3.9 1.7 H1.2 A1.7 1.7 0 0 1 1.2 -1.7 Z"/><path d="M-1.8 0 H1.8"/></g>
<g fill="#666"><circle cx="993.9" cy="41.6" r="0.75"/><circle cx="993.9" cy="43.9" r="0.75"/><circle cx="993.9" cy="46.2" r="0.75"/></g>
<path d="M1008.2 42.1 L1011.8 45.9 M1011.8 42.1 L1008.2 45.9" stroke="#888" stroke-width="0.85"/>

<!-- table scroll arrows -->
<polygon points="116.6,465.6 118.2,464.7 118.2,466.5" fill="#c8c8c8"/>
<polygon points="1002.2,465.6 1000.6,464.7 1000.6,466.5" fill="#444"/>
<polygon points="368.80,62.55 371.70,62.55 370.25,64.05" fill="#262626"/><polygon points="488.80,62.55 491.70,62.55 490.25,64.05" fill="#262626"/><polygon points="637.55,62.55 640.45,62.55 639.00,64.05" fill="#262626"/><polygon points="986.15,62.55 989.05,62.55 987.60,64.05" fill="#262626"/><polygon points="360.25,101.45 363.15,101.45 361.70,102.95" fill="#262626"/><rect x="373.00" y="100.10" width="2.8" height="2.7" rx="0.5" fill="#fff" stroke="#5e5e5e" stroke-width="0.6"/><rect x="371.40" y="101.80" width="3.0" height="3.0" rx="0.5" fill="#fff" stroke="#5e5e5e" stroke-width="0.6"/><polygon points="360.25,121.95 363.15,121.95 361.70,123.45" fill="#262626"/><rect x="373.00" y="120.60" width="2.8" height="2.7" rx="0.5" fill="#fff" stroke="#5e5e5e" stroke-width="0.6"/><rect x="371.40" y="122.30" width="3.0" height="3.0" rx="0.5" fill="#fff" stroke="#5e5e5e" stroke-width="0.6"/><polygon points="360.25,140.35 363.15,140.35 361.70,141.85" fill="#262626"/><rect x="373.00" y="139.00" width="2.8" height="2.7" rx="0.5" fill="#fff" stroke="#5e5e5e" stroke-width="0.6"/><rect x="371.40" y="140.70" width="3.0" height="3.0" rx="0.5" fill="#fff" stroke="#5e5e5e" stroke-width="0.6"/><polygon points="678.95,80.75 681.85,80.75 680.40,82.25" fill="#262626"/><rect x="691.70" y="79.40" width="2.8" height="2.7" rx="0.5" fill="#fff" stroke="#5e5e5e" stroke-width="0.6"/><rect x="690.10" y="81.10" width="3.0" height="3.0" rx="0.5" fill="#fff" stroke="#5e5e5e" stroke-width="0.6"/><polygon points="678.95,101.45 681.85,101.45 680.40,102.95" fill="#262626"/><rect x="691.70" y="100.10" width="2.8" height="2.7" rx="0.5" fill="#fff" stroke="#5e5e5e" stroke-width="0.6"/><rect x="690.10" y="101.80" width="3.0" height="3.0" rx="0.5" fill="#fff" stroke="#5e5e5e" stroke-width="0.6"/><polygon points="678.95,121.95 681.85,121.95 680.40,123.45" fill="#262626"/><rect x="691.70" y="120.60" width="2.8" height="2.7" rx="0.5" fill="#fff" stroke="#5e5e5e" stroke-width="0.6"/><rect x="690.10" y="122.30" width="3.0" height="3.0" rx="0.5" fill="#fff" stroke="#5e5e5e" stroke-width="0.6"/><polygon points="209.80,194.25 212.70,194.25 211.25,195.75" fill="#262626"/><polygon points="1001.75,194.25 1004.65,194.25 1003.20,195.75" fill="#262626"/><polygon points="637.45,545.95 640.35,545.95 638.90,547.45" fill="#262626"/><rect x="650.20" y="544.60" width="2.8" height="2.7" rx="0.5" fill="#fff" stroke="#5e5e5e" stroke-width="0.6"/><rect x="648.60" y="546.30" width="3.0" height="3.0" rx="0.5" fill="#fff" stroke="#5e5e5e" stroke-width="0.6"/></svg>
</div></body></html>
